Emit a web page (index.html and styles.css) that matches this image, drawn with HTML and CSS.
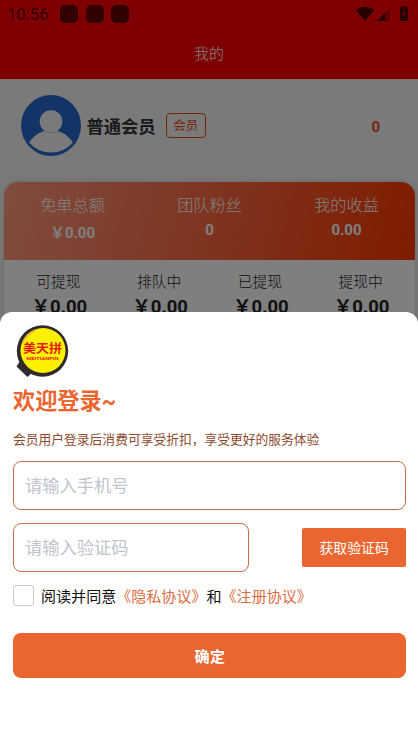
FILE: index.html
```html
<!DOCTYPE html>
<html lang="zh-CN">
<head>
<meta charset="utf-8">
<title>我的</title>
<link rel="stylesheet" href="styles.css">
</head>
<body>
<main class="page">
  <header class="header">
    <div class="status">
      <span class="clock">10:56</span>
      <i class="dot"></i><i class="dot"></i><i class="dot"></i>
      <svg class="signals" width="54" height="16" viewBox="0 0 54 16">
        <path d="M0 4.2C5-.4 13-.4 18 4.2L9 15Z"/>
        <path d="M21 15 34 2V15Z" opacity=".35"/>
        <path d="M21 15 29 7V15Z"/>
        <path d="M46 0h4v1.3h1.2q.8 0 .8.8v12.1q0 .8-.8.8h-6.400q-.8 0-.8-.8V2.100q0-.8.8-.8H46Z"/>
        <path class="bolt" d="M49 3.600 45.800 8.500H47.600L46.700 12.200 50.200 7.200H48.400Z"/>
      </svg>
    </div>
    <h1 class="title">我的</h1>
  </header>
  <section class="profile">
    <svg class="avatar" width="60" height="61" viewBox="0 0 60 61">
      <ellipse cx="30" cy="30.500" rx="30" ry="30.500" fill="#2768cf"/>
      <path d="M8 47.500C12 42 17 37.500 23.500 36Q30 40 36.500 36C43 37.500 48 42 52 47.500A29 29 0 0 1 8 47.500Z" fill="#f4f4f4"/>
      <circle cx="30" cy="26.500" r="11.300" fill="#f4f4f4"/>
    </svg>
    <span class="name">普通会员</span>
    <span class="badge">会员</span>
    <span class="points">0</span>
  </section>
  <section class="card">
    <div class="totals">
      <div class="total"><span>免单总额</span><b class="lower">￥0.00</b></div>
      <div class="total"><span>团队粉丝</span><b>0</b></div>
      <div class="total"><span>我的收益</span><b>0.00</b></div>
    </div>
    <div class="cash">
      <div class="item"><span>可提现</span><b>￥0.00</b></div>
      <div class="item"><span>排队中</span><b>￥0.00</b></div>
      <div class="item"><span>已提现</span><b>￥0.00</b></div>
      <div class="item"><span>提现中</span><b>￥0.00</b></div>
    </div>
  </section>
</main>
<div class="mask"></div>
<form class="sheet">
  <svg class="logo" width="54" height="54" viewBox="0 0 54 54">
    <path d="M4 36 .5 41.500 11.500 52 18 46Z" fill="#302a2b"/>
    <circle cx="26.500" cy="26" r="25.700" fill="#302a2b"/>
    <circle cx="27" cy="25.500" r="22.500" fill="#fff000"/>
    <path d="M5.500 20A22 22 0 0 1 22 4Q11 10 5.500 20Z" fill="#f5ac45"/>
    <text class="logo-name" transform="translate(7 28) scale(1 .93)" textLength="39" lengthAdjust="spacingAndGlyphs">美天拼</text>
    <text class="logo-sub" x="26.500" y="35" text-anchor="middle" textLength="32" lengthAdjust="spacingAndGlyphs">MEITIANPIN</text>
  </svg>
  <h2 class="welcome">欢迎登录~</h2>
  <p class="hint">会员用户登录后消费可享受折扣，享受更好的服务体验</p>
  <input class="field" type="tel" placeholder="请输入手机号">
  <div class="row">
    <input class="field code" type="text" placeholder="请输入验证码">
    <button class="get" type="button">获取验证码</button>
  </div>
  <label class="agree"><i class="box"></i><span>阅读并同意<a>《隐私协议》</a>和<a>《注册协议》</a></span></label>
  <button class="submit" type="button">确定</button>
</form>
</body>
</html>
```
FILE: styles.css
```css
* { box-sizing: border-box; }
html, body { height: 100%; }
body {
  margin: 0;
  overflow: hidden;
  font-family: Roboto, "Noto Sans CJK SC", sans-serif;
  background: #f4f4f4;
}
.page { height: 744px; overflow: hidden; }
.header { height: 79px; background: #f00; }
.status {
  display: flex;
  align-items: center;
  height: 28px;
  padding: 0 11px 0 7px;
  color: #600;
}
.clock { width: 53px; font-size: 16.500px; letter-spacing: .1px; }
.dot { width: 18px; height: 18px; margin-right: 7.500px; border-radius: 5px; background: #600; }
.signals { margin-left: auto; margin-right: -3px; fill: #500000; }
.signals .bolt { fill: #d00000; }
.title {
  margin: 15px 0 0;
  font-size: 15px;
  font-weight: 300;
  line-height: 22px;
  text-align: center;
  color: #fff;
}
.profile {
  display: flex;
  align-items: center;
  height: 103.400px;
  padding: 0 38px 12px 21px;
  border-top: 1px solid #ffe0e0;
}
.avatar { flex: none; }
.name { margin-left: 5.500px; font-size: 17.300px; font-weight: 700; color: #333; }
.badge {
  width: 40px;
  height: 25px;
  margin-left: 10px;
  border: 1.500px solid #e64a19;
  border-radius: 4px;
  font-size: 12.500px;
  line-height: 24px;
  text-align: center;
  color: #e64a19;
}
.points { margin-left: auto; padding-top: 3px; font-size: 15px; font-weight: 700; color: #e64a19; }
.card {
  height: 300px;
  margin: 0 3px 0 4px;
  border-radius: 14px 14px 0 0;
  background: #fff;
  overflow: hidden;
  box-shadow: 0 0 6px rgba(0, 0, 0, .15);
}
.totals {
  display: flex;
  height: 77.500px;
  padding-top: 12px;
  background: linear-gradient(105deg, #ff9a80, #ff3800 100%);
}
.total { flex: 1; text-align: center; color: #fff; }
.total span, .total b, .item span, .item b { display: block; }
.total span { font-size: 16.200px; font-weight: 300; line-height: 24px; }
.total b { font-size: 15px; line-height: 25px; }
.total .lower { padding-top: 3px; }
.cash { display: flex; padding: 11px 4px 0 4px; }
.item { flex: 1; text-align: center; color: #222; }
.item span { font-size: 14.800px; font-weight: 300; line-height: 22px; }
.item b { font-size: 18.500px; line-height: 29px; padding-left: 2px; }
.mask { position: fixed; inset: 0; background: rgba(0, 0, 0, .5); }
.sheet {
  position: fixed;
  left: 0;
  right: 0;
  bottom: 0;
  height: 432px;
  padding: 13px 11.600px 0 13px;
  border-radius: 12px 12px 0 0;
  background: #fff;
}
.logo { display: block; margin-left: 3px; }
.logo-name { font-size: 13px; font-weight: 700; fill: #e51b18; }
.logo-sub { font-size: 4px; font-weight: 700; fill: #e51b18; }
.welcome { margin: 6px 0 0; font-size: 22.200px; line-height: 32px; color: #ea652f; }
.hint { margin: 13px 0 12px; font-size: 12.770px; line-height: 19px; color: #8b4a2d; }
.field {
  display: block;
  width: 100%;
  height: 49px;
  padding: 0 11px 2px;
  border: 1px solid #c76f4c;
  border-radius: 8px;
  font: 400 17.250px "Noto Sans CJK SC", sans-serif;
  outline: 0;
  background: #fff;
}
.field::placeholder { color: #c0c4cc; }
.row { display: flex; align-items: center; justify-content: space-between; margin-top: 12.500px; }
.code { width: 236px; }
.get, .submit { border: 0; padding: 0; font-family: inherit; color: #fff; background: #ea652f; }
.get { width: 104.500px; height: 39px; border-radius: 2px; font-size: 13.900px; }
.agree { display: flex; align-items: center; height: 22px; margin-top: 12.500px; font-size: 15.050px; color: #111; white-space: nowrap; }
.agree a { color: #dc6c42; }
.box { width: 21px; height: 21px; margin-right: 7px; border: 1px solid #c8c8c8; border-radius: 3px; }
.submit { display: block; width: 100%; height: 44.500px; margin-top: 27px; border-radius: 8px; font-size: 15.200px; font-weight: 700; }
```
